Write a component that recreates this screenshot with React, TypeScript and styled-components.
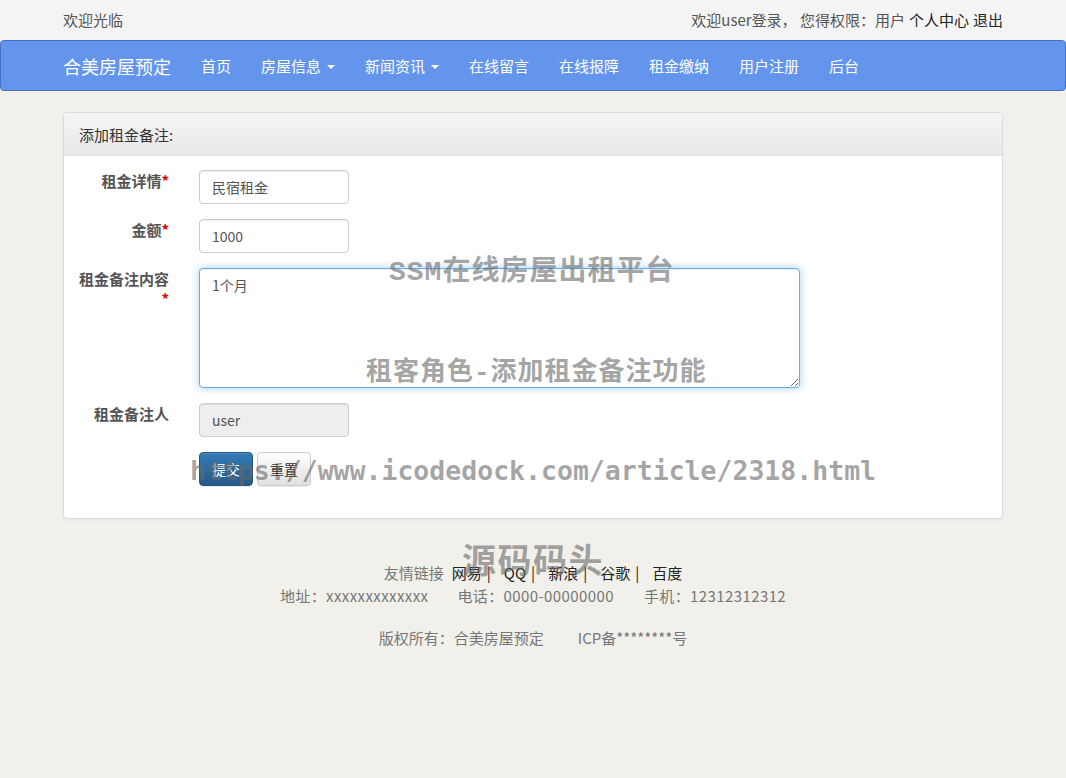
import React from "react";
import styled, { createGlobalStyle } from "styled-components";

const Global = createGlobalStyle`
  html, body { margin: 0; padding: 0; min-height: 100%; }
  body {
    background: #f1f0ea;
    font-family: "Noto Sans CJK SC", "Liberation Sans", sans-serif;
    font-size: 15px;
    color: #555;
  }
  #root { min-height: 778px; }
  * { box-sizing: border-box; }
`;

const Page = styled.div`
  position: relative;
  min-height: 778px;
  background: #f1f0ea;
`;

const TopBar = styled.div`
  height: 40px;
  background: #f4f4f4;
`;

const Container = styled.div`
  width: 940px;
  margin: 0 auto;
`;

const TopInner = styled(Container)`
  height: 40px;
  display: flex;
  align-items: center;
  justify-content: space-between;
  line-height: 20px;
  color: #555;
`;

const TopLink = styled.a`
  color: #222;
  text-decoration: none;
  margin-left: 4px;
`;

const Navbar = styled.nav`
  height: 51px;
  background: #6495ed;
  border: 1px solid #4571c4;
  border-radius: 4px;
`;

const NavInner = styled(Container)`
  display: flex;
  align-items: center;
  height: 49px;
`;

const Brand = styled.a`
  font-size: 18px;
  color: #fff;
  padding-right: 15px;
  line-height: 20px;
  text-decoration: none;
`;

const NavItem = styled.a`
  color: #fff;
  padding: 0 15px;
  font-size: 15px;
  line-height: 20px;
  text-decoration: none;
  display: flex;
  align-items: center;
`;

const Caret = styled.span`
  display: inline-block;
  width: 0;
  height: 0;
  margin-left: 6px;
  border-top: 4px solid #fff;
  border-left: 4px solid transparent;
  border-right: 4px solid transparent;
  margin-top: 2px;
`;

const Panel = styled(Container)`
  margin-top: 21px;
  background: #fff;
  border: 1px solid #ddd;
  border-radius: 4px;
  box-shadow: 0 1px 2px rgba(0, 0, 0, 0.05);
  overflow: hidden;
`;

const PanelHeading = styled.div`
  height: 43px;
  padding: 0 15px;
  display: flex;
  align-items: center;
  background: linear-gradient(#f5f5f5, #e8e8e8);
  border-bottom: 1px solid #ddd;
  color: #333;
  font-size: 15px;
`;

const PanelBody = styled.div`
  padding: 14px 15px 17px;
`;

const FormRow = styled.div`
  display: grid;
  grid-template-columns: 90px 1fr;
  column-gap: 30px;
  margin-bottom: 15px;
`;

const Label = styled.label`
  text-align: right;
  font-weight: bold;
  color: #555;
  line-height: 20px;
  padding-top: 1px;
  font-size: 15px;
`;

const Star = styled.span`
  color: #d00;
`;

const Input = styled.input<{ $w?: number }>`
  width: ${(p) => p.$w ?? 150}px;
  height: 34px;
  padding: 6px 12px;
  font-size: 14px;
  font-family: inherit;
  color: #555;
  background: ${(p) => (p.disabled ? "#eee" : "#fff")};
  border: 1px solid #ccc;
  border-radius: 4px;
  box-shadow: inset 0 1px 1px rgba(0, 0, 0, 0.075);
  outline: none;
`;

const TextArea = styled.textarea`
  width: 601px;
  height: 120px;
  padding: 6px 12px;
  font-size: 14px;
  line-height: 20px;
  font-family: inherit;
  color: #555;
  border: 1px solid #66afe9;
  border-radius: 4px;
  outline: none;
  box-shadow: inset 0 1px 1px rgba(0, 0, 0, 0.075), 0 0 8px rgba(102, 175, 233, 0.6);
  display: block;
`;

const Buttons = styled.div`
  display: flex;
  gap: 4px;
`;

const Button = styled.button<{ $primary?: boolean }>`
  height: 34px;
  width: 54px;
  padding: 0;
  font-size: 14px;
  font-family: inherit;
  border-radius: 4px;
  cursor: pointer;
  color: ${(p) => (p.$primary ? "#fff" : "#333")};
  background: ${(p) =>
    p.$primary ? "linear-gradient(#337ab7, #265a88)" : "linear-gradient(#fff, #e0e0e0)"};
  border: 1px solid ${(p) => (p.$primary ? "#245580" : "#ccc")};
  box-shadow: inset 0 1px 0 rgba(255, 255, 255, 0.15), 0 1px 1px rgba(0, 0, 0, 0.075);
`;

const Footer = styled.footer`
  margin-top: 42px;
  text-align: center;
  color: #777;
  font-size: 15px;
  line-height: 23px;
`;

const FooterLine = styled.div<{ $gapTop?: number; $ls?: number }>`
  margin-top: ${(p) => p.$gapTop ?? 0}px;
  letter-spacing: ${(p) => p.$ls ?? 0}px;
  display: flex;
  justify-content: center;
`;

const FooterItem = styled.span<{ $gap?: number }>`
  margin-right: ${(p) => p.$gap ?? 0}px;
  &:last-child { margin-right: 0; }
`;

const FriendLink = styled.a`
  color: #222;
  text-decoration: none;
  margin-left: 8px;
`;

const Pipe = styled.span`
  color: #222;
  margin-left: 5px;
  margin-right: 5px;
`;

const Watermark = styled.div<{ $size: number; $mono?: boolean; $ls?: number }>`
  position: absolute;
  white-space: nowrap;
  font-family: ${(p) =>
    p.$mono
      ? `"DejaVu Sans Mono", "Liberation Mono", monospace`
      : `"Liberation Mono", "Noto Sans CJK SC", sans-serif`};
  font-weight: 700;
  font-size: ${(p) => p.$size}px;
  letter-spacing: ${(p) => p.$ls ?? 0}px;
  line-height: 1;
  color: rgba(105, 105, 105, 0.6);
  pointer-events: none;
`;

const navItems: { label: string; caret?: boolean }[] = [
  { label: "首页" },
  { label: "房屋信息", caret: true },
  { label: "新闻资讯", caret: true },
  { label: "在线留言" },
  { label: "在线报障" },
  { label: "租金缴纳" },
  { label: "用户注册" },
  { label: "后台" },
];

const friends = ["网易", "QQ", "新浪", "谷歌", "百度"];

export default function App() {
  return (
    <>
      <Global />
      <Page>
        <TopBar>
          <TopInner>
            <span>欢迎光临</span>
            <span>
              欢迎user登录， 您得权限：用户
              <TopLink href="#">个人中心</TopLink>
              <TopLink href="#">退出</TopLink>
            </span>
          </TopInner>
        </TopBar>
        <Navbar>
          <NavInner>
            <Brand href="#">合美房屋预定</Brand>
            {navItems.map((n) => (
              <NavItem key={n.label} href="#">
                {n.label}
                {n.caret && <Caret />}
              </NavItem>
            ))}
          </NavInner>
        </Navbar>

        <Panel>
          <PanelHeading>添加租金备注:</PanelHeading>
          <PanelBody>
            <FormRow>
              <Label>
                租金详情<Star>*</Star>
              </Label>
              <div>
                <Input defaultValue="民宿租金" />
              </div>
            </FormRow>
            <FormRow>
              <Label>
                金额<Star>*</Star>
              </Label>
              <div>
                <Input defaultValue="1000" />
              </div>
            </FormRow>
            <FormRow>
              <Label>
                租金备注内容
                <br />
                <Star>*</Star>
              </Label>
              <div>
                <TextArea defaultValue="1个月" />
              </div>
            </FormRow>
            <FormRow>
              <Label>租金备注人</Label>
              <div>
                <Input defaultValue="user" disabled />
              </div>
            </FormRow>
            <FormRow>
              <span />
              <Buttons>
                <Button $primary>提交</Button>
                <Button>重置</Button>
              </Buttons>
            </FormRow>
          </PanelBody>
        </Panel>

        <Footer>
          <FooterLine>
            <span>友情链接</span>
            {friends.map((f, i) => (
              <span key={f}>
                <FriendLink href="#">{f}</FriendLink>
                {i < friends.length - 1 && <Pipe>|</Pipe>}
              </span>
            ))}
          </FooterLine>
          <FooterLine $ls={0.4}>
            <FooterItem $gap={29}>地址：xxxxxxxxxxxxx</FooterItem>
            <FooterItem $gap={30}>电话：0000-00000000</FooterItem>
            <FooterItem>手机：12312312312</FooterItem>
          </FooterLine>
          <FooterLine $gapTop={19}>
            <FooterItem $gap={34}>版权所有：合美房屋预定</FooterItem>
            <FooterItem>ICP备********号</FooterItem>
          </FooterLine>
        </Footer>

        <Watermark $size={28} $ls={1} style={{ left: 389, top: 259 }}>
          SSM在线房屋出租平台
        </Watermark>
        <Watermark $size={26} $ls={1} style={{ left: 366, top: 360 }}>
          租客角色-添加租金备注功能
        </Watermark>
        <Watermark $size={26.5} $mono style={{ left: 190, top: 458 }}>
          https://www.icodedock.com/article/2318.html
        </Watermark>
        <Watermark $size={34} $ls={1.5} style={{ left: 462, top: 547 }}>
          源码码头
        </Watermark>
      </Page>
    </>
  );
}
